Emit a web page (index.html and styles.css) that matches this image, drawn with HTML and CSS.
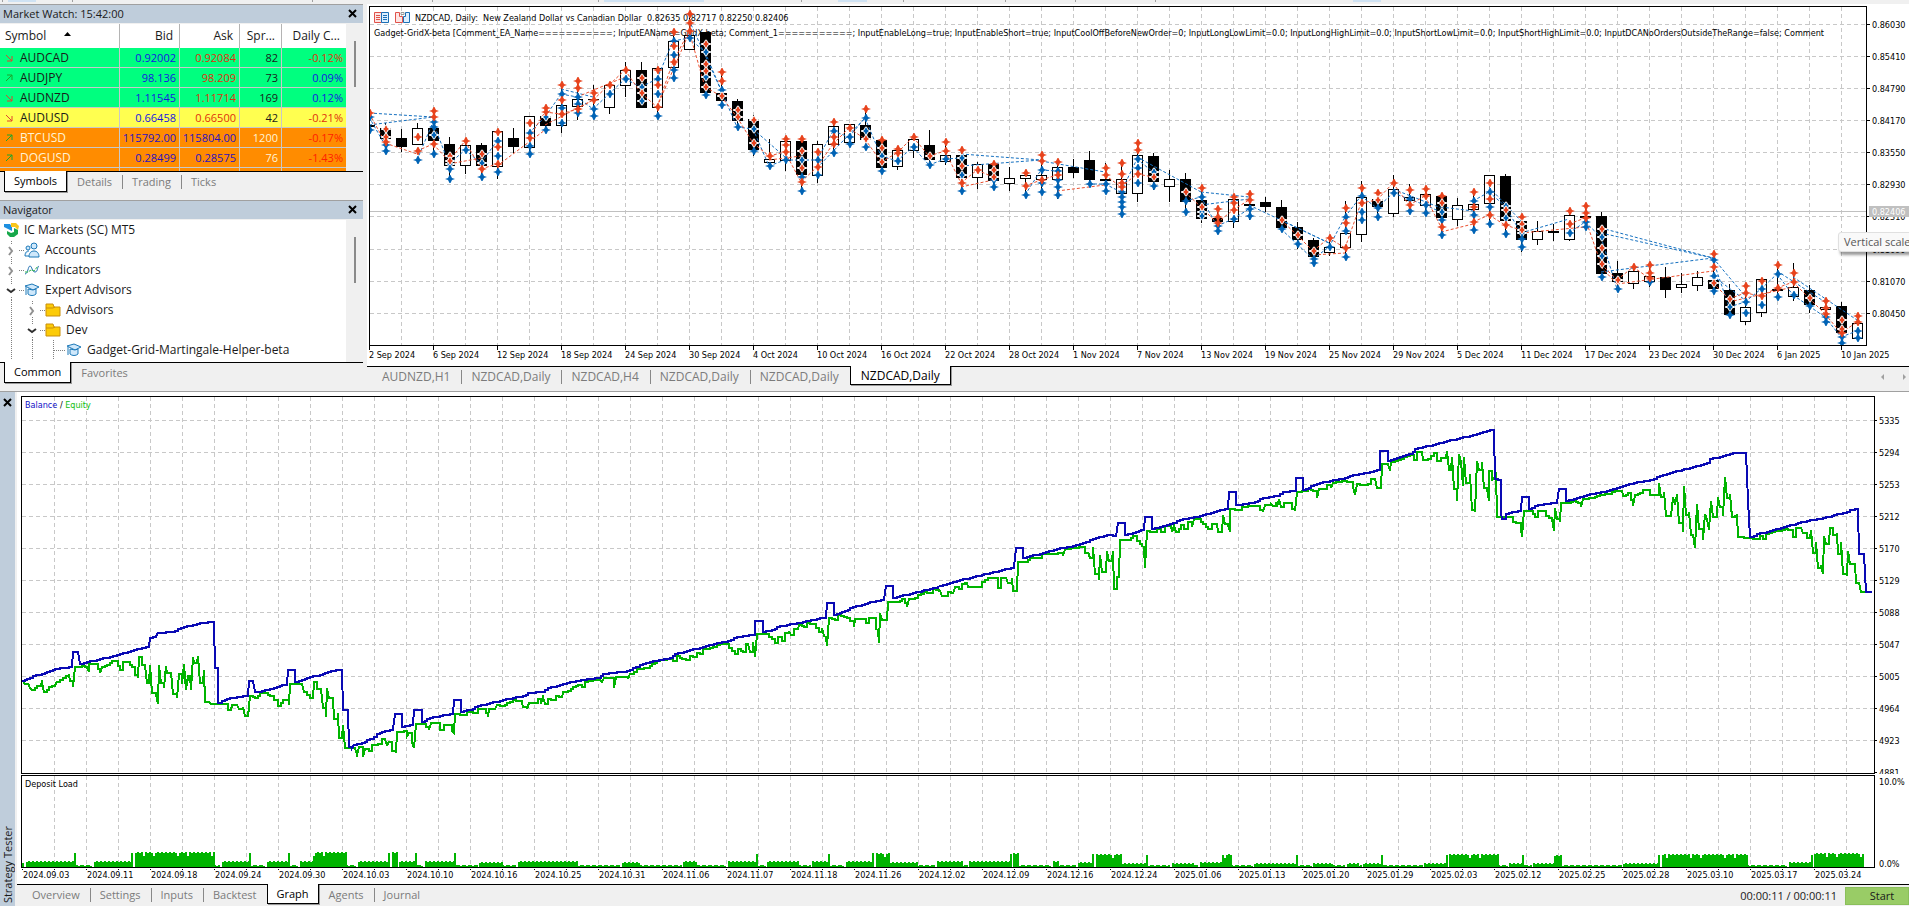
FILE: index.html
```html
<!DOCTYPE html>
<html lang="en">
<head>
    <meta charset="UTF-8">
    <meta name="viewport" content="width=device-width, initial-scale=1.0">
    <title>MetaTrader 5 - Strategy Tester</title>
    <link rel="stylesheet" href="styles.css">
</head>
<body>

    <svg class="toolbar-edge" aria-hidden="true">
        <g fill="#cfe2f3">
            <rect x="8" width="28" height="2"/><rect x="604" width="100" height="2"/>
            <rect x="838" width="29" height="2"/><rect x="1353" width="28" height="2"/>
        </g>
        <g fill="#a0a0a0">
            <rect x="2" width="1" height="2"/><rect x="72" width="1" height="2"/><rect x="312" width="1" height="2"/>
            <rect x="432" width="1" height="2"/><rect x="598" width="1" height="2"/><rect x="801" width="1" height="2"/>
            <rect x="903" width="1" height="2"/><rect x="1005" width="1" height="2"/><rect x="1075" width="1" height="2"/>
            <rect x="1155" width="1" height="2"/>
        </g>
    </svg>

    <main class="workspace">
        <div class="side">
            <section class="panel market">
                <header class="panel-title">
                    <span>Market Watch: 15:42:00</span>
                    <button class="close" aria-label="Close Market Watch"><svg viewBox="0 0 9 9"><path d="M1 1l7 7M8 1l-7 7"/></svg></button>
                </header>
                <div class="panel-body">
                    <table class="quotes">
                        <thead>
                            <tr>
                                <th class="symbol">Symbol <svg class="sort" viewBox="0 0 7 4"><path d="M0 4L3.500 0L7 4z"/></svg></th>
                                <th>Bid</th>
                                <th>Ask</th>
                                <th>Spr...</th>
                                <th>Daily C...</th>
                            </tr>
                        </thead>
                        <tbody id="quoteRows"></tbody>
                    </table>
                    <div class="scroll"><div class="thumb"></div></div>
                </div>
                <nav class="tabs">
                    <button class="tab active">Symbols</button>
                    <button class="tab">Details</button>
                    <button class="tab">Trading</button>
                    <button class="tab">Ticks</button>
                </nav>
            </section>

            <section class="panel navigator">
                <header class="panel-title">
                    <span>Navigator</span>
                    <button class="close" aria-label="Close Navigator"><svg viewBox="0 0 9 9"><path d="M1 1l7 7M8 1l-7 7"/></svg></button>
                </header>
                <div class="panel-body">
                    <ul class="tree">
                        <li class="root">
                            <svg class="icon" viewBox="0 0 16 16">
                                <path d="M1 2h6l2 3v4L1 5z" fill="#1d8fe0"/>
                                <path d="M8 1h5l3 3-1 4-3-3H8z" fill="#f8c51c"/>
                                <path d="M4 9l4 2 3-1V6l4 2v4l-4 3H7L4 12z" fill="#17a84b"/>
                            </svg>
                            <span>IC Markets (SC) MT5</span>
                        </li>
                        <li>
                            <svg class="guide g1" viewBox="0 0 24 20"><path class="dots" d="M11.500 1v4M11.500 17v3M19 10.500h5"/><path class="closed" d="M9 7l3 4-3 4"/></svg>
                            <svg class="icon people" viewBox="0 0 16 16">
                                <circle cx="10" cy="4" r="3"/><circle cx="4" cy="6" r="2"/>
                                <path d="M1 14c0-4 2-5 4-5M5 15c0-4 2-6 5-6s5 2 5 6zM1 14h4"/>
                            </svg>
                            <span>Accounts</span>
                        </li>
                        <li>
                            <svg class="guide g1" viewBox="0 0 24 20"><path class="dots" d="M11.500 1v4M11.500 17v3M19 10.500h5"/><path class="closed" d="M9 7l3 4-3 4"/></svg>
                            <svg class="icon wave" viewBox="0 0 16 16">
                                <path d="M1 12c3 0 3-8 5-8s2 6 5 6 2-5 4-6" stroke="#1f6fb2"/>
                                <path d="M1 10h3l3-2 3 1 4-5" stroke="#2db34a" stroke-dasharray="3 1"/>
                            </svg>
                            <span>Indicators</span>
                        </li>
                        <li>
                            <svg class="guide g1" viewBox="0 0 24 20"><path class="dots" d="M11.500 1v4M11.500 17v3M19 10.500h5"/><path class="open" d="M7 9l4 3 4-3"/></svg>
                            <svg class="icon cap" viewBox="0 0 16 16">
                                <path d="M1 4l7-2 7 3-6 3z"/><path d="M4 7v5c2 2 6 2 8 0V7L9 8z"/><path d="M2 5v8"/>
                            </svg>
                            <span>Expert Advisors</span>
                        </li>
                        <li>
                            <svg class="guide g2" viewBox="0 0 45 20"><path class="dots" d="M11.500 0v20M32.500 1v4M32.500 17v3M40 10.500h5"/><path class="closed" d="M30 7l3 4-3 4"/></svg>
                            <svg class="icon folder" viewBox="0 0 16 16"><path d="M1 2h7l1 3h6v9H1z"/><path d="M1 6h7l2-1"/></svg>
                            <span>Advisors</span>
                        </li>
                        <li>
                            <svg class="guide g2" viewBox="0 0 45 20"><path class="dots" d="M11.500 0v20M32.500 1v4M32.500 17v3M40 10.500h5"/><path class="open" d="M28 9l4 3 4-3"/></svg>
                            <svg class="icon folder" viewBox="0 0 16 16"><path d="M1 2h7l1 3h6v9H1z"/><path d="M1 6h7l2-1"/></svg>
                            <span>Dev</span>
                        </li>
                        <li>
                            <svg class="guide g3" viewBox="0 0 66 20"><path class="dots" d="M11.500 0v20M32.500 0v20M53.500 0v20M54 10.500h12"/></svg>
                            <svg class="icon cap" viewBox="0 0 16 16">
                                <path d="M1 4l7-2 7 3-6 3z"/><path d="M4 7v5c2 2 6 2 8 0V7L9 8z"/><path d="M2 5v8"/>
                            </svg>
                            <span>Gadget-Grid-Martingale-Helper-beta</span>
                        </li>
                    </ul>
                    <div class="scroll"><div class="thumb"></div></div>
                </div>
                <nav class="tabs">
                    <button class="tab active">Common</button>
                    <button class="tab">Favorites</button>
                </nav>
            </section>
        </div>

        <section class="chart-window">
            <div class="chart">
                <svg id="pricePlot" class="plot"></svg>
                <div class="price-axis">
                    <svg id="priceAxis" class="axis"></svg>
                    <div class="tooltip">Vertical scale</div>
                </div>
                <svg id="priceDates" class="dates"></svg>
            </div>
            <nav class="tabs chart-tabs">
                <button class="tab">AUDNZD,H1</button>
                <button class="tab">NZDCAD,Daily</button>
                <button class="tab">NZDCAD,H4</button>
                <button class="tab">NZDCAD,Daily</button>
                <button class="tab">NZDCAD,Daily</button>
                <button class="tab active">NZDCAD,Daily</button>
                <div class="pager">
                    <button aria-label="Scroll tabs left"><svg viewBox="0 0 4 6"><path d="M3 0v6L0 3z"/></svg></button>
                    <button aria-label="Scroll tabs right"><svg viewBox="0 0 4 6"><path d="M1 0v6l3-3z"/></svg></button>
                </div>
            </nav>
        </section>
    </main>

    <section class="tester">
        <header class="tester-title">
            <button class="close" aria-label="Close Strategy Tester"><svg viewBox="0 0 9 9"><path d="M1 1l7 7M8 1l-7 7"/></svg></button>
            <span>Strategy Tester</span>
        </header>
        <div class="tester-body">
            <div class="graphs">
                <svg id="balancePlot" class="plot"></svg>
                <svg id="balanceAxis" class="axis"></svg>
                <svg id="loadPlot" class="plot"></svg>
                <svg id="loadAxis" class="axis"></svg>
                <svg id="testDates" class="dates"></svg>
            </div>
            <footer class="tabs tester-tabs">
                <button class="tab">Overview</button>
                <button class="tab">Settings</button>
                <button class="tab">Inputs</button>
                <button class="tab">Backtest</button>
                <button class="tab active">Graph</button>
                <button class="tab">Agents</button>
                <button class="tab">Journal</button>
                <span class="elapsed">00:00:11 / 00:00:11</span>
                <button class="start">Start</button>
            </footer>
        </div>
    </section>

    <script src="script.js"></script>
</body>
</html>
```
FILE: styles.css
```css
* {
    box-sizing: border-box;
}

body {
    margin: 0;
    height: 100vh;
    display: flex;
    flex-direction: column;
    overflow: hidden;
    background-color: #f0f0f0;
    font-family: "Open Sans", "Noto Sans", sans-serif;
    font-size: 12px;
    color: #1a1a1a;
}

button {
    font: inherit;
    color: inherit;
    border: none;
    background: none;
    padding: 0;
    cursor: pointer;
}

svg {
    display: block;
}

.toolbar-edge {
    width: 100%;
    height: 4px;
    flex: none;
}

.workspace {
    display: grid;
    grid-template-columns: 363px 1fr;
    gap: 4px;
    height: 387px;
    flex: none;
}

.side {
    display: flex;
    flex-direction: column;
}

/* docked panels */
.panel {
    display: flex;
    flex-direction: column;
}

.market {
    height: 196px;
}

.navigator {
    flex: 1;
    min-height: 0;
}

.panel-title {
    display: flex;
    align-items: center;
    justify-content: space-between;
    height: 19px;
    margin-bottom: 1px;
    padding: 0 6px 2px 3px;
    border-top: 1px solid #a0a0a0;
    background-color: #bfcddb;
    font-size: 11px;
}

.close svg {
    width: 9px;
    height: 9px;
    fill: none;
    stroke: #000;
    stroke-width: 2;
}

.panel-body {
    display: flex;
    flex: 1;
    min-height: 0;
    overflow: hidden;
}

.scroll {
    width: 17px;
    padding: 17px 8px 0 8px;
}

.thumb {
    width: 2px;
    height: 46px;
    background-color: #8a8a8a;
}

/* market watch table */
.quotes {
    flex: 1;
    height: 164px;
    table-layout: fixed;
    border-collapse: separate;
    border-spacing: 0;
    background-color: white;
}

.quotes th {
    height: 24px;
    padding: 0 6px 2px 0;
    font-weight: normal;
    text-align: right;
    border-right: 1px solid #b4b4b4;
}

.quotes th:last-child,
.quotes td:last-child {
    border-right: none;
}

.quotes th.symbol {
    width: 120px;
    padding-left: 5px;
    text-align: left;
}

.quotes th:nth-child(2),
.quotes th:nth-child(3) {
    width: 60px;
}

.quotes th:nth-child(4) {
    width: 42px;
}

.sort {
    display: inline-block;
    width: 7px;
    height: 4px;
    margin: 0 0 4px 15px;
}

.quotes td {
    height: 20px;
    padding: 0 3px 0 0;
    font-size: 11px;
    line-height: 16px;
    text-align: right;
    border-right: 1px solid #c8c8c8;
    border-bottom: 1px solid #c8c8c8;
}

.quotes td:first-child {
    text-align: left;
    padding-left: 5px;
    font-size: 12px;
}

.quotes td svg {
    display: inline-block;
    width: 8px;
    height: 8px;
    margin-right: 7px;
    fill: none;
    stroke: #e0452c;
}

.quotes td svg.up {
    stroke: #1ca52c;
}

.green {
    background-color: #00ff7f;
}

.yellow {
    background-color: #ffff50;
}

.orange {
    background-color: #ff8c00;
    color: #fff3d6;
}

.blue {
    color: #1616e0;
}

.red {
    color: #e0300c;
}

.orange .red {
    color: #ff2000;
}

.orange .blue,
.orange .ask {
    color: #2a10c0;
}

/* navigator tree */
.tree {
    flex: 1;
    margin: 0;
    padding: 0;
    list-style: none;
    background-color: white;
    overflow: hidden;
}

.tree li {
    display: flex;
    align-items: center;
    height: 20px;
}

.tree .root {
    padding-left: 3px;
}

.tree span {
    margin-left: 5px;
    padding-bottom: 2px;
    white-space: nowrap;
}

.icon {
    width: 16px;
    height: 16px;
}

.guide {
    height: 20px;
    fill: none;
}

.g1 {
    width: 24px;
}

.g2 {
    width: 45px;
}

.g3 {
    width: 66px;
}

.dots {
    stroke: #808080;
    stroke-dasharray: 1 1;
}

.closed {
    stroke: #909090;
    stroke-width: 2;
}

.open {
    stroke: #303030;
    stroke-width: 2;
}

.people,
.cap {
    fill: #cfe8fb;
    stroke: #1b78b8;
}

.wave {
    fill: none;
}

.folder {
    fill: #fccb08;
    stroke: #c98f0a;
}

/* tab strips */
.tabs {
    display: flex;
    align-items: flex-start;
    height: 29px;
    padding-left: 4px;
    border-top: 1px solid black;
    flex: none;
}

.tab {
    height: 20px;
    padding: 0 10px 2px;
    font-size: 11px;
    color: #7b7b7b;
    white-space: nowrap;
}

.tab:not(.active) + .tab:not(.active) {
    background: linear-gradient(#888, #888) left center / 1px 14px no-repeat;
}

.tab.active {
    height: 21px;
    margin-top: -1px;
    padding: 0 9px 1px;
    color: black;
    background-color: white;
    border: 1px solid black;
    border-top: none;
    box-shadow: 1px 1px 0 #999;
}

/* price chart */
.chart-window {
    display: flex;
    flex-direction: column;
    min-width: 0;
}

.chart {
    flex: 1;
    min-height: 0;
    display: grid;
    grid-template-columns: 1fr 42px;
    grid-template-rows: 1fr 20px;
    padding: 2px 0 0 2px;
    background-color: white;
}

.plot {
    width: 100%;
    height: 100%;
    min-height: 0;
    border: 1px solid black;
    overflow: hidden;
}

.axis {
    width: 100%;
    height: 100%;
}

.dates {
    grid-column: 1 / 3;
    width: 100%;
    height: 100%;
}

.plot text,
.axis text,
.dates text {
    font-family: "DejaVu Sans Condensed", "DejaVu Sans", sans-serif;
    font-size: 9px;
    white-space: pre;
}

.price-axis {
    position: relative;
}

.tooltip {
    position: absolute;
    top: 226px;
    left: -29px;
    width: 90px;
    height: 20px;
    padding-left: 5px;
    font-size: 11px;
    line-height: 18px;
    white-space: nowrap;
    color: #575757;
    background-color: #f9f9f9;
    border: 1px solid #e0e0e0;
    border-radius: 3px;
    box-shadow: 2px 3px 3px rgba(0, 0, 0, 0.4);
}

.chart-tabs {
    height: 25px;
    padding-left: 5px;
}

.chart-tabs .tab {
    padding: 0 11px 2px 10px;
    font-size: 12px;
}

.chart-tabs .tab.active {
    height: 19px;
    padding: 0 10px;
}

.pager {
    display: flex;
    gap: 17px;
    margin: 7px 3px 0 auto;
}

.pager svg {
    width: 4px;
    height: 6px;
    fill: #a0a0a0;
}

.grid-line {
    stroke: #c8c8c8;
    stroke-dasharray: 4 3;
}

.tick {
    stroke: black;
}

.wick {
    stroke: black;
}

.body-up {
    fill: white;
    stroke: black;
}

.body-down {
    fill: black;
    stroke: black;
}

.buy {
    fill: #0063b5;
}

.sell {
    fill: #e8431d;
}

.on-dark {
    stroke: white;
}

.link-buy,
.link-sell {
    fill: none;
    stroke-dasharray: 3 2;
}

.link-buy {
    stroke: #1470c0;
}

.link-sell {
    stroke: #ea5030;
}

.last-price {
    stroke: #c0c0c0;
}

.last-box {
    fill: #c0c0c0;
}

.axis .last-text {
    fill: white;
}

/* strategy tester */
.tester {
    display: flex;
    flex: 1;
    min-height: 0;
    border-top: 1px solid #a0a0a0;
}

.tester-title {
    display: flex;
    flex-direction: column;
    justify-content: space-between;
    align-items: center;
    width: 15px;
    padding: 6px 0 3px;
    margin-right: 2px;
    background-color: #bfcddb;
}

.tester-title span {
    writing-mode: vertical-rl;
    transform: rotate(180deg);
    font-size: 11px;
    line-height: 15px;
}

.tester-body {
    display: flex;
    flex-direction: column;
    flex: 1;
    min-width: 0;
}

.graphs {
    flex: 1;
    min-height: 0;
    display: grid;
    grid-template-columns: 1fr 34px;
    grid-template-rows: 1fr 93px 16px;
    row-gap: 1px;
    padding: 4px 0 0 4px;
    margin-bottom: -1px;
    background-color: white;
}

.balance-line,
.equity-line {
    fill: none;
    stroke-width: 2;
    shape-rendering: crispEdges;
}

.balance-line {
    stroke: #0a0ab4;
}

.equity-line {
    stroke: #00b400;
}

.load {
    fill: #00b400;
}

.balance-label {
    fill: #1010c8;
}

.equity-label {
    fill: #10c010;
}

.tester-tabs {
    height: 22px;
    padding-left: 5px;
}

.tester-tabs .tab.active {
    height: 20px;
}

.elapsed {
    margin: 3px 8px 0 auto;
    font-size: 11px;
}

.start {
    width: 64px;
    height: 18px;
    margin-top: 2px;
    padding-left: 10px;
    background-color: #99cc66;
    border: 1px solid #8abf5a;
    line-height: 16px;
    font-size: 11px;
}
```
FILE: script.js
```js
const NS = "http://www.w3.org/2000/svg";

function add(parent, tag, attrs, text) {
    const el = document.createElementNS(NS, tag);
    for (const key in attrs) el.setAttribute(key, attrs[key]);
    if (text) el.textContent = text;
    parent.appendChild(el);
    return el;
}

function line(parent, cls, x1, y1, x2, y2) {
    return add(parent, "line", { class: cls, x1, y1, x2, y2 });
}

function byId(id) {
    return document.getElementById(id);
}

// ---- Market Watch ----
const quotes = [
    ["AUDCAD", "down", "0.92002", "0.92084", "82", "-0.12%", "green"],
    ["AUDJPY", "up", "98.136", "98.209", "73", "0.09%", "green"],
    ["AUDNZD", "down", "1.11545", "1.11714", "169", "0.12%", "green"],
    ["AUDUSD", "down", "0.66458", "0.66500", "42", "-0.21%", "yellow"],
    ["BTCUSD", "up", "115792.00", "115804.00", "1200", "-0.17%", "orange"],
    ["DOGUSD", "up", "0.28499", "0.28575", "76", "-1.43%", "orange"],
    ["", "", "", "", "", "", "orange"]
];

quotes.forEach(([symbol, dir, bid, ask, spread, change, color]) => {
    const arrow = dir === "up" ? "M1 7L7 1M2 1h5v5" : "M1 1l6 6M7 2v5H2";
    const icon = dir ? `<svg class="${dir}" viewBox="0 0 8 8"><path d="${arrow}"/></svg>` : "";
    const row = document.createElement("tr");
    row.className = color;
    row.innerHTML = `
        <td>${icon}${symbol}</td>
        <td class="blue">${bid}</td>
        <td class="${color === "orange" ? "ask" : "red"}">${ask}</td>
        <td>${spread}</td>
        <td class="${change[0] === "-" ? "red" : "blue"}">${change}</td>`;
    byId("quoteRows").appendChild(row);
});

// ---- Price chart ----
// One bar every 16px, y values in thirds of a pixel:
// [up?, body top, body bottom, high, low, sell marks, buy marks]
const bars = [
    [0, 376, 378, 340, 392, [338], [350, 390]],
    [0, 383, 415, 370, 450, [386, 410, 425], [436, 454]],
    [0, 414, 437, 388, 456, [], []],
    [1, 385, 433, 370, 433, [412, 452], [481]],
    [0, 384, 421, 340, 460, [334, 352, 433], [366, 380, 404, 462]],
    [0, 433, 496, 412, 535, [467, 482], [492, 508, 538]],
    [1, 436, 496, 422, 521, [422], [450]],
    [0, 435, 496, 428, 530, [462, 506], [488, 532]],
    [1, 394, 499, 394, 536, [395, 440, 491], [424, 468, 516]],
    [0, 414, 439, 384, 458, [], []],
    [1, 349, 442, 349, 462, [368, 413], [398, 438, 462]],
    [0, 348, 376, 325, 390, [324, 336], [351, 391]],
    [1, 316, 376, 254, 398, [254, 299, 342], [283, 324, 370]],
    [1, 298, 318, 244, 360, [244, 264, 328], [290, 312, 340]],
    [0, 296, 298, 256, 349, [278, 299], [326, 349]],
    [1, 256, 322, 256, 341, [254], [283]],
    [1, 211, 256, 186, 290, [209], [237]],
    [0, 211, 322, 186, 325, [234, 278], [260, 302]],
    [1, 203, 322, 203, 348, [209, 254, 321], [238, 282, 348]],
    [1, 124, 202, 96, 234, [96, 139, 185], [124, 165, 210, 234]],
    [1, 105, 146, 42, 150, [42, 68, 92], [114]],
    [0, 96, 276, 96, 285, [133, 192, 214, 260], [156, 232, 285]],
    [0, 278, 300, 217, 315, [217, 244, 289], [270, 315]],
    [0, 304, 359, 297, 381, [330, 352], [381]],
    [0, 358, 448, 345, 468, [359, 428], [388, 454]],
    [1, 478, 485, 418, 498, [469], [498]],
    [1, 424, 480, 416, 512, [416, 434, 455], [481]],
    [0, 424, 523, 416, 573, [416, 454, 503, 546], [480, 530, 573]],
    [1, 433, 526, 424, 550, [455, 500], [481, 524]],
    [1, 377, 433, 365, 459, [365, 410, 432], [393, 459]],
    [1, 373, 427, 373, 433, [383], [411, 433]],
    [0, 376, 418, 326, 441, [326, 416], [353, 393, 441]],
    [0, 421, 500, 420, 513, [420, 443, 485], [468, 513]],
    [1, 451, 499, 446, 511, [446, 460], [484]],
    [1, 418, 451, 412, 473, [412], [440]],
    [0, 436, 478, 390, 496, [467], [496]],
    [1, 466, 482, 425, 496, [425, 452], [478]],
    [0, 466, 532, 449, 574, [449, 497, 548], [475, 524, 574]],
    [1, 493, 532, 487, 566, [509], []],
    [0, 491, 540, 491, 560, [491, 511, 530], [540, 560]],
    [1, 535, 550, 502, 572, [], []],
    [1, 526, 535, 518, 585, [518, 557], [585]],
    [1, 526, 538, 464, 576, [464, 482, 541], [511, 550, 576]],
    [1, 502, 538, 485, 598, [485, 526], [512, 541, 560, 586]],
    [0, 502, 515, 478, 535, [], []],
    [0, 481, 538, 454, 552, [], [552]],
    [0, 538, 541, 490, 572, [503, 526], [552, 572]],
    [1, 538, 580, 488, 643, [488, 523, 549, 562], [577, 591, 606, 622, 643]],
    [1, 466, 580, 428, 605, [428, 449, 521], [477, 503, 549]],
    [0, 469, 544, 460, 570, [531], [515, 558]],
    [1, 538, 559, 510, 605, [], []],
    [0, 538, 602, 520, 642, [575], [603, 636]],
    [0, 601, 653, 563, 668, [563, 620], [592, 635, 648]],
    [0, 655, 662, 626, 694, [626, 650, 668], [678, 694]],
    [1, 598, 664, 590, 683, [590, 608, 631], [657]],
    [0, 613, 615, 581, 660, [581, 600], [628, 648]],
    [0, 607, 619, 591, 635, [], []],
    [0, 622, 682, 600, 688, [660], [688]],
    [0, 682, 718, 666, 748, [704], [733]],
    [0, 721, 767, 714, 790, [752], [776, 790]],
    [1, 740, 757, 713, 769, [713], [741]],
    [1, 700, 740, 603, 771, [623, 670, 743], [652, 693, 771]],
    [1, 591, 703, 543, 727, [563, 608], [588, 637, 660]],
    [0, 598, 618, 580, 652, [580, 600], [625, 652]],
    [1, 568, 640, 525, 650, [550], [579]],
    [1, 590, 600, 552, 634, [569, 616], [598, 634]],
    [1, 583, 616, 566, 640, [566, 587], [616, 640]],
    [0, 587, 650, 587, 706, [587, 608, 680], [637, 660, 706]],
    [1, 616, 658, 595, 678, [], []],
    [1, 613, 628, 575, 691, [575, 622, 667], [603, 645, 691]],
    [1, 526, 610, 526, 673, [548, 598, 645], [577, 622, 673]],
    [0, 529, 661, 522, 703, [630, 674], [618, 655, 703]],
    [0, 664, 718, 652, 755, [652, 671, 690], [700, 718, 742]],
    [1, 694, 718, 664, 734, [], []],
    [0, 694, 696, 673, 722, [], []],
    [1, 646, 718, 632, 722, [632, 671], [700]],
    [0, 648, 650, 617, 682, [617, 638, 655], [667, 682]],
    [0, 649, 820, 637, 832, [686, 744, 792], [712, 768, 832]],
    [0, 820, 844, 784, 868, [839], [868]],
    [1, 814, 850, 800, 866, [800], []],
    [1, 829, 842, 794, 860, [794, 818, 835], [847]],
    [0, 832, 868, 802, 893, [], []],
    [1, 853, 862, 820, 878, [], []],
    [1, 832, 854, 812, 872, [], []],
    [0, 841, 865, 762, 874, [762, 800, 848], [780, 827, 874]],
    [0, 871, 943, 853, 948, [896], [922, 944]],
    [1, 922, 964, 857, 974, [857, 880], [906, 940]],
    [1, 838, 937, 838, 950, [842, 887], [868, 915]],
    [0, 866, 869, 794, 891, [794, 864], [822, 891]],
    [1, 862, 888, 790, 902, [818, 845], [885]],
    [0, 871, 913, 856, 938, [894], [919]],
    [1, 920, 928, 903, 967, [903, 924, 941], [952, 967]],
    [0, 919, 997, 907, 1030, [960, 988, 1000], [1012, 1030]],
    [1, 970, 1015, 947, 1015, [947, 966], [994, 1014]]
];

// deals held over several bars: [type, from bar, y, to bar, y]
const deals = [
    ["buy", 0, 338, 4, 350], ["buy", 0, 375, 4, 350], ["sell", 1, 430, 3, 462], ["sell", 5, 492, 7, 475],
    ["sell", 8, 497, 11, 391], ["buy", 12, 268, 14, 290], ["sell", 11, 375, 14, 299], ["sell", 13, 290, 16, 232],
    ["sell", 18, 322, 20, 100], ["buy", 20, 60, 22, 270], ["buy", 24, 388, 26, 470], ["sell", 25, 480, 27, 467],
    ["buy", 28, 505, 31, 353], ["buy", 37, 462, 42, 480], ["buy", 37, 497, 42, 480], ["sell", 37, 560, 39, 540],
    ["buy", 42, 484, 46, 516], ["sell", 43, 572, 46, 556], ["buy", 48, 470, 52, 577], ["buy", 52, 577, 55, 592],
    ["buy", 52, 614, 55, 596], ["buy", 55, 614, 60, 728], ["buy", 57, 660, 60, 728], ["sell", 59, 765, 61, 758],
    ["buy", 64, 568, 67, 625], ["buy", 67, 622, 69, 634], ["sell", 67, 695, 69, 672], ["buy", 70, 560, 72, 664],
    ["buy", 72, 700, 75, 658], ["sell", 72, 700, 76, 680], ["buy", 77, 685, 84, 775], ["buy", 77, 700, 84, 775],
    ["buy", 77, 816, 84, 775], ["sell", 77, 800, 78, 852], ["sell", 78, 852, 84, 814], ["buy", 84, 775, 86, 888],
    ["buy", 84, 827, 86, 900], ["buy", 88, 812, 91, 905], ["buy", 89, 830, 93, 960], ["sell", 85, 905, 89, 862]
];

const info = "Gadget-GridX-beta [Comment_EA_Name===========; InputEAName=GridX-beta; Comment_1===========; " +
    "InputEnableLong=true; InputEnableShort=true; InputCoolOffBeforeNewOrder=0; InputLongLowLimit=0.0; " +
    "InputLongHighLimit=0.0; InputShortLowLimit=0.0; InputShortHighLimit=0.0; " +
    "InputDCANoOrdersOutsideTheRange=false; Comment";

const priceRows = [17, 49, 81, 113, 145, 177, 209, 242, 274, 306];
const priceLabels = ["0.86030", "0.85410", "0.84790", "0.84170", "0.83550", "0.82930", "0.82310", "0.81690", "0.81070", "0.80450"];
const priceDates = ["2 Sep 2024", "6 Sep 2024", "12 Sep 2024", "18 Sep 2024", "24 Sep 2024", "30 Sep 2024", "4 Oct 2024",
    "10 Oct 2024", "16 Oct 2024", "22 Oct 2024", "28 Oct 2024", "1 Nov 2024", "7 Nov 2024", "13 Nov 2024", "19 Nov 2024",
    "25 Nov 2024", "29 Nov 2024", "5 Dec 2024", "11 Dec 2024", "17 Dec 2024", "23 Dec 2024", "30 Dec 2024", "6 Jan 2025", "10 Jan 2025"];

function grid(svg, firstX, rows) {
    for (let x = firstX; x < svg.clientWidth; x += 32) line(svg, "grid-line", x + 0.5, 0, x + 0.5, svg.clientHeight);
    rows.forEach(y => line(svg, "grid-line", 0, y + 0.5, svg.clientWidth, y + 0.5));
}

function mark(svg, cls, x, y) {
    add(svg, "path", { class: cls, d: `M${x - 4} ${y}l3 -1 1.500 -3h1l1.500 3 3 1 -3 1 -1.500 3h-1l-1.500 -3z` });
}

function drawPrice() {
    const svg = byId("pricePlot");
    const barX = i => 16 * i - 1;
    const barY = y => Math.round(y / 3) - 7;

    grid(svg, 31, priceRows);
    line(svg, "last-price", 0, 204.5, svg.clientWidth, 204.5);

    // one-click and depth of market buttons
    const icons = add(svg, "g", { fill: "none" });
    add(icons, "path", { d: "M11.500 5.500h-7v10h7z", stroke: "#e0524a", fill: "#fde5e3" });
    add(icons, "path", { d: "M11.500 5.500h7v10h-7z", stroke: "#1b6fb5", fill: "#dcefff" });
    add(icons, "path", { d: "M6 8.500h4M6 10.500h4M6 12.500h4", stroke: "#e0524a" });
    add(icons, "path", { d: "M13 8.500h4M13 10.500h4M13 12.500h4", stroke: "#1b6fb5" });
    add(icons, "path", { d: "M25.500 5.500h4v4h3v6h-7z", stroke: "#e0524a", fill: "#fde5e3" });
    add(icons, "path", { d: "M39.500 5.500h-4v4h-2v6h6z", stroke: "#1b6fb5", fill: "#dcefff" });
    add(icons, "path", { d: "M31 5.500h3v2h-3z", stroke: "#999999" });

    add(svg, "text", { x: 45, y: 14 }, "NZDCAD, Daily:  New Zealand Dollar vs Canadian Dollar  0.82635 0.82717 0.82250 0.82406");
    add(svg, "text", { x: 4, y: 29 }, info);

    bars.forEach(([up, top, bottom, high, low], i) => {
        const x = barX(i);
        line(svg, "wick", x + 0.5, barY(high), x + 0.5, barY(low));
        add(svg, "rect", {
            class: up ? "body-up" : "body-down",
            x: x - 4.5, y: barY(top) + 0.5, width: 10, height: Math.max(barY(bottom) - barY(top), 0.1)
        });
    });

    deals.forEach(([type, a, y1, b, y2]) => line(svg, "link-" + type, barX(a), barY(y1), barX(b), barY(y2)));
    for (let i = 1; i < bars.length; i++) {
        const [sells, buys] = [bars[i][5], bars[i][6]];
        const [lastSells, lastBuys] = [bars[i - 1][5], bars[i - 1][6]];
        if (buys.length && lastBuys.length) {
            line(svg, "link-buy", barX(i - 1), barY(lastBuys[0]), barX(i), barY(buys[0]));
        }
        if (sells.length && lastSells.length) {
            line(svg, "link-sell", barX(i - 1), barY(lastSells[lastSells.length - 1]), barX(i), barY(sells[sells.length - 1]));
        }
    }

    bars.forEach(([up, top, bottom, high, low, sells, buys], i) => {
        const dark = y => !up && y > top && y < bottom ? " on-dark" : "";
        buys.forEach(y => mark(svg, "buy" + dark(y), barX(i), barY(y)));
        sells.forEach(y => mark(svg, "sell" + dark(y), barX(i), barY(y)));
    });

    const axis = byId("priceAxis");
    priceRows.forEach((y, i) => {
        line(axis, "tick", 0, y + 1.5, 3, y + 1.5);
        add(axis, "text", { x: 5, y: y + 5 }, priceLabels[i]);
    });
    add(axis, "rect", { class: "last-box", x: 2, y: 200, width: 40, height: 11 });
    add(axis, "text", { class: "last-text", x: 5, y: 209 }, "0.82406");

    const dates = byId("priceDates");
    priceDates.forEach((label, i) => {
        line(dates, "tick", 64 * i + 0.5, 0, 64 * i + 0.5, 4);
        add(dates, "text", { x: 64 * i, y: 12 }, label);
    });
}

// ---- Tester graph ----
// [x offset, points], all in thirds of a pixel
const balance = [
    [-66, "65,887 80,882 100,872 125,868 150,858 165,852 190,848 217,846 219,802 233,800 240,838 262,832 290,825 310,818 330,815 360,806 385,800 410,792 425,788 446,784 451,758 467,752 475,744 515,742 535,732 560,724 580,719 600,715 641,711 645,850 653,955 665,949 690,938 710,937 743,929 746,888 758,887 766,922 785,918 810,912 830,905 845,899 861,898 865,856 876,855 886,892 905,886 930,875 960,869 985,860 1025,852 1029,974 1043,976 1048,1085 1055,1088 1062,1079 1085,1073 1110,1062 1130,1048 1145,1041 1180,1031 1186,987 1196,987 1207,1026 1240,1017 1243,976 1256,976 1267,1011 1290,1000 1330,990 1358,986 1362,944 1373,945 1383,981 1410,973"],
    [1344, "0,974 25,963 60,955 100,946 130,938 160,934 175,925 215,920 235,909 270,901 300,892 350,882 385,878 400,868 450,862 470,857 490,848 520,838 550,829 600,820 615,808 650,798 700,786 740,775 765,770 800,757 855,746 856,708 868,708 878,742 905,736 920,727 960,718 1000,711 1040,702 1067,696 1071,655 1081,654 1092,690 1125,679 1150,666 1185,658 1200,650 1243,644 1249,603 1259,603 1269,640 1290,634 1330,624 1380,611 1405,606"],
    [2754, "0,604 30,595 60,586 100,575 150,564 185,555 223,545 229,489 241,488 250,518 270,512 310,503 350,493 400,484 430,474 460,463 500,451 528,453 534,415 546,413 556,449 580,444 611,433 616,396 626,396 637,432 660,425 690,418 720,405 780,394 830,377 863,368 868,322 878,322 887,361 910,356 945,350 970,339 1010,332 1030,322 1060,318 1067,279 1076,279 1088,314 1130,296 1180,284 1215,278 1240,270 1280,265 1319,251 1321,199 1332,197 1343,228 1370,218 1390,212 1408,206"],
    [4164, "0,207 15,193 40,187 70,180 110,168 150,160 180,153 210,145 240,135 251,138 255,282 265,284 272,385 277,402 287,388 332,376 337,337 346,336 357,373 385,360 442,352 447,313 459,312 469,348 500,340 540,328 590,317 640,304 680,290 720,284 740,275 790,262 840,250 890,234 900,222 940,212 970,205 1007,204 1013,345 1020,457 1040,446 1080,438 1130,422 1190,408 1240,398 1300,384 1320,376 1343,371 1348,506 1361,508 1367,620 1382,618"]
];

const equity = [
    [-66, "68,887 75,897 85,895 90,910 97,915 110,903 122,900 125,890 132,921 147,905 165,900 170,890 190,880 207,868 210,888 220,890 220,905 225,845 245,842 262,848 266,862 268,838 285,838 300,863 305,845 320,840 335,828 345,828 360,855 368,832 382,832 395,845 405,870 415,878 418,815 425,840 435,840 440,895 448,893 450,840 456,925 468,927 473,957 478,840 482,893 492,910 497,843 502,865 514,862 520,926 532,938 538,868 545,897 552,838 558,915 565,870 568,888 570,870 574,915 579,817 583,833 591,833 595,812 600,893 608,893 612,855 616,950 628,950 632,957 675,957 685,975 692,975 695,960 712,960 718,973 728,966 735,993 745,995 750,933 765,938 780,925 795,925 810,933 822,945 835,962 850,945 858,945 866,960 870,898 905,898 912,922 930,938 940,938 943,890 950,912 962,912 968,968 977,995 981,908 988,940 998,940 1002,1002 1013,985 1018,1058 1026,1058 1030,1020 1035,1088 1065,1088 1072,1110 1077,1085 1089,1115 1095,1092 1108,1098 1115,1080 1135,1078 1145,1063 1155,1065 1160,1080 1167,1070 1175,1098 1187,1105 1192,1040 1212,1038 1222,1052 1228,1045 1236,1070 1243,1090 1249,1018 1270,1018 1286,1034 1293,1015 1310,1015 1320,1035 1332,1020 1345,1020 1355,1037 1363,1043 1366,988 1390,990 1400,980"],
    [1344, "0,980 15,985 25,973 38,973 55,995 58,973 75,973 82,960 95,963 110,953 130,945 155,951 160,965 172,971 178,955 195,953 205,942 214,956 220,937 226,957 235,943 250,945 258,933 275,938 280,920 295,917 310,907 325,900 336,907 345,892 370,884 390,885 396,892 402,878 420,880 433,908 438,877 465,877 473,883 480,866 500,853 530,848 545,838 570,826 600,822 610,828 620,814 635,822 648,825 660,812 670,817 680,805 690,808 700,793 720,788 750,778 765,778 778,790 795,807 805,793 818,800 828,778 835,778 841,800 848,772 855,817 861,748 885,748 905,762 915,773 925,757 937,767 945,745 958,738 963,750 972,733 985,733 988,721 1003,727 1010,713 1030,717 1048,740 1057,730 1061,752 1068,755 1072,782 1078,700 1095,705 1105,690 1130,700 1140,708 1152,725 1156,703 1175,703 1187,715 1197,699 1210,699 1217,733 1224,735 1228,775 1231,685 1236,705 1250,705 1254,652 1280,650 1297,642 1312,665 1318,643 1335,640 1345,631 1362,622 1378,625 1390,613 1408,617"],
    [2754, "0,618 5,632 15,632 25,620 38,626 45,607 58,611 65,597 80,592 85,607 118,605 125,591 145,580 162,580 175,608 182,580 198,580 203,594 215,580 220,618 231,618 234,532 255,530 270,520 297,518 305,508 345,508 368,500 370,512 375,492 425,487 435,503 445,500 450,520 460,487 466,568 476,584 481,510 487,560 498,558 502,498 508,528 516,525 519,498 523,612 530,577 537,575 541,466 565,465 580,453 590,467 605,483 611,485 616,548 622,438 640,441 650,431 663,440 675,424 692,424 697,440 702,424 708,440 722,421 732,433 745,411 755,425 762,403 775,403 790,417 805,433 815,418 830,413 835,440 847,443 850,390 855,417 865,420 869,440 871,373 895,374 905,367 925,362 950,362 960,374 968,381 975,360 992,356 998,362 1008,350 1012,366 1018,342 1022,365 1032,353 1048,353 1056,373 1066,377 1072,321 1095,318 1105,313 1118,317 1130,339 1137,313 1152,313 1162,300 1172,310 1178,293 1205,287 1230,290 1238,306 1246,330 1252,296 1268,300 1285,297 1293,283 1305,278 1312,308 1322,311 1326,238 1345,238 1349,258 1353,230 1375,225 1400,212"],
    [4164, "0,210 13,225 20,202 35,202 40,224 55,222 72,205 80,228 92,220 108,215 112,197 116,255 122,255 127,217 133,313 142,347 148,207 153,232 160,303 163,215 168,293 180,268 185,375 196,381 201,228 207,255 217,232 222,310 230,313 236,347 238,258 245,285 252,283 257,262 261,396 300,396 308,410 325,413 332,428 337,456 341,379 360,379 376,395 384,377 400,377 408,392 425,403 432,438 436,370 442,403 449,412 454,354 475,354 490,348 505,355 512,365 518,343 545,338 570,330 595,328 605,320 635,315 640,332 655,325 668,362 675,330 690,325 700,315 712,315 720,330 735,330 748,295 753,335 763,320 769,393 782,393 788,337 795,360 802,328 808,413 818,440 823,303 829,390 838,380 843,450 850,450 856,488 862,358 866,432 878,466 884,388 890,403 898,435 904,348 910,395 920,393 925,337 930,366 940,392 946,276 951,340 961,328 966,397 980,388 984,457 1038,462 1050,452 1060,462 1067,447 1085,442 1125,433 1140,435 1149,457 1157,430 1172,430 1180,443 1192,458 1200,458 1204,435 1210,505 1218,472 1224,550 1232,540 1238,567 1241,453 1248,477 1258,475 1261,430 1268,450 1280,445 1285,507 1294,470 1300,568 1312,572 1315,498 1320,538 1334,535 1337,595 1348,592 1354,621 1380,621"]
];

// deposit load: [from, to, height], the space between two runs is nearly idle
const load = [
    [22, 24, 4], [26, 74, 6], [74, 76, 14], [94, 131, 6], [131, 133, 14], [135, 214, 15], [222, 249, 6], [249, 251, 14],
    [267, 288, 6], [288, 290, 14], [300, 313, 6], [313, 346, 15], [358, 388, 6], [388, 390, 14], [392, 398, 15],
    [399, 415, 6], [415, 417, 14], [425, 454, 6], [454, 456, 14], [479, 502, 5], [518, 578, 6], [622, 640, 5],
    [683, 696, 6], [728, 756, 6], [756, 758, 13], [767, 799, 6], [812, 828, 6], [828, 830, 13], [846, 872, 6],
    [872, 874, 14], [876, 889, 14], [890, 917, 5], [937, 962, 6], [969, 1010, 6], [1010, 1012, 13], [1013, 1019, 14],
    [1053, 1058, 6], [1078, 1092, 5], [1092, 1094, 13], [1096, 1121, 13], [1122, 1146, 4], [1146, 1148, 12],
    [1172, 1194, 4], [1200, 1222, 5], [1222, 1231, 13], [1254, 1296, 4], [1296, 1298, 12], [1313, 1333, 4],
    [1347, 1358, 4], [1363, 1381, 4], [1381, 1383, 12], [1424, 1446, 4], [1446, 1448, 12], [1449, 1498, 13],
    [1509, 1522, 4], [1522, 1524, 12], [1533, 1554, 4], [1554, 1562, 12], [1623, 1658, 4], [1658, 1660, 12],
    [1662, 1747, 13], [1789, 1811, 5], [1811, 1813, 12], [1814, 1863, 14]
];

const balanceLabels = ["5335", "5294", "5253", "5212", "5170", "5129", "5088", "5047", "5005", "4964", "4923", "4881"];
const testDates = ["2024.09.03", "2024.09.11", "2024.09.18", "2024.09.24", "2024.09.30", "2024.10.03", "2024.10.10",
    "2024.10.16", "2024.10.25", "2024.10.31", "2024.11.06", "2024.11.07", "2024.11.18", "2024.11.26", "2024.12.02",
    "2024.12.09", "2024.12.16", "2024.12.24", "2025.01.06", "2025.01.13", "2025.01.20", "2025.01.29", "2025.02.03",
    "2025.02.12", "2025.02.25", "2025.02.28", "2025.03.10", "2025.03.17", "2025.03.24"];

// the value only changes once per tester step, so slopes turn into stairs
function curve(parts, step) {
    const points = [];
    parts.forEach(([offset, list]) => list.split(" ").forEach(p => {
        const [px, py] = p.split(",").map(Number);
        const x = Math.round((px + offset) / 3);
        const y = Math.round(py / 3) - 12;
        const last = points[points.length - 1];
        if (last && x - last[0] > 2) {
            const [x0, y0] = last;
            const count = Math.max(1, Math.round((x - x0) / step));
            for (let i = 1; i <= count; i++) {
                const nx = Math.round(x0 + (x - x0) * i / count);
                const ny = Math.round(y0 + (y - y0) * i / count);
                points.push([nx, points[points.length - 1][1]], [nx, ny]);
            }
        } else {
            points.push([x, y]);
        }
    }));
    return points.map(p => p.join(",")).join(" ");
}

function drawTester() {
    const svg = byId("balancePlot");
    const rows = balanceLabels.map((label, i) => 23 + 32 * i);
    grid(svg, 32, rows.slice(0, 11));
    add(svg, "polyline", { class: "equity-line", points: curve(equity, 3) });
    add(svg, "polyline", { class: "balance-line", points: curve(balance, 3) });
    const legend = add(svg, "text", { x: 3, y: 11 });
    add(legend, "tspan", { class: "balance-label" }, "Balance ");
    add(legend, "tspan", {}, "/ ");
    add(legend, "tspan", { class: "equity-label" }, "Equity");

    const axis = byId("balanceAxis");
    rows.forEach((y, i) => {
        line(axis, "tick", 0, y + 1.5, 2, y + 1.5);
        add(axis, "text", { x: 4, y: y + 5 }, balanceLabels[i]);
    });

    const plot = byId("loadPlot");
    const base = plot.clientHeight;
    grid(plot, 32, []);
    let end = 22;
    load.forEach(([from, to, height]) => {
        for (let x = end; x < from - 2; x += 2) {
            const h = [2, 1, 2, 4, 1, 3][(x * 7 + end) % 6];
            add(plot, "rect", { class: "load", x: x - 22, y: base - h, width: 2, height: h });
        }
        for (let x = from; x < to; x += 2) {
            const dip = height > 12 && to - from > 8 && (x * 5) % 17 < 2 ? 4 : (x >> 1) % 2;
            const h = to - from > 2 ? height - dip : height;
            add(plot, "rect", { class: "load", x: x - 22, y: base - h, width: 2, height: h });
        }
        end = to;
    });
    add(plot, "text", { x: 3, y: 11 }, "Deposit Load");

    const loadAxis = byId("loadAxis");
    add(loadAxis, "text", { x: 4, y: 10 }, "10.0%");
    add(loadAxis, "text", { x: 4, y: 92 }, "0.0%");

    const dates = byId("testDates");
    testDates.forEach((label, i) => {
        line(dates, "tick", 64 * i + 1.5, 0, 64 * i + 1.5, 1);
        line(dates, "tick", 64 * i + 33.5, 0, 64 * i + 33.5, 1);
        add(dates, "text", { x: 64 * i + 2, y: 9 }, label);
    });
}

drawPrice();
drawTester();
```
